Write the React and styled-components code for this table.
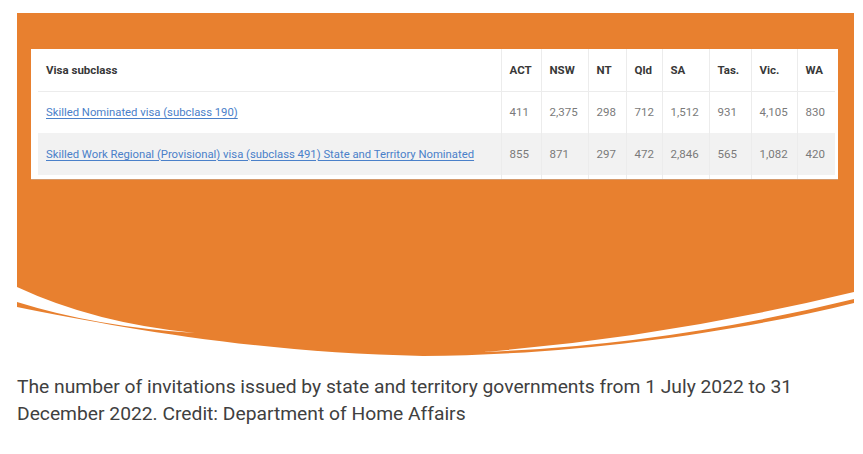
import React from "react";
import styled, { createGlobalStyle } from "styled-components";

const Global = createGlobalStyle`
  html, body { margin: 0; padding: 0; background: #ffffff; }
  body { font-family: Roboto, "Liberation Sans", Arial, sans-serif; }
`;

const ORANGE = "#e8802f";

const Page = styled.main`
  width: 863px;
  padding: 13px 0 0 17px;
  box-sizing: border-box;
`;

const Figure = styled.figure`
  margin: 0;
  width: 837px;
`;

const Banner = styled.div`
  background: ${ORANGE};
  height: 274px;
  padding: 36px 16px 0 14px;
  box-sizing: border-box;
`;

const Card = styled.div`
  background: #ffffff;
  height: 131px;
  padding: 0 3px 0 7px;
  overflow: hidden;
  box-sizing: border-box;
  border-bottom: 1px solid #d59a6c;
`;

const Table = styled.table`
  width: 797px;
  table-layout: fixed;
  border-collapse: collapse;
  font-family: Roboto, "Liberation Sans", Arial, sans-serif;
`;

const Row = styled.tr`
  height: 42px;
  background: ${(p) => (p.$shaded ? "#f2f2f2" : "transparent")};
  border-bottom: ${(p) => (p.$head ? "1px solid #ececec" : "none")};
`;

const Th = styled.th`
  text-align: left;
  font-size: 11.5px;
  font-weight: 700;
  color: #383838;
  padding: 0 8px;
  border-left: ${(p) => (p.$first ? "none" : "1px solid #ececec")};
  white-space: nowrap;
`;

const Td = styled.td`
  font-size: 11.5px;
  font-weight: 400;
  color: #7a7a7a;
  padding: 0 8px;
  border-left: ${(p) => (p.$first ? "none" : "1px solid #ececec")};
  white-space: nowrap;
`;

const VisaLink = styled.a`
  color: #4a80c9;
  font-size: 11.3px;
  text-decoration: underline;
  text-underline-offset: 2px;
  text-decoration-thickness: 1px;
`;

const Wave = styled.svg`
  display: block;
  width: 837px;
  height: 71px;
`;

const Caption = styled.figcaption`
  margin: 15px 0 0 0;
  font-size: 19.25px;
  line-height: 27px;
  color: #404040;
  width: 837px;
`;

const cols = [463, 40, 47, 38, 36, 47, 42, 46, 38];
const heads = ["ACT", "NSW", "NT", "Qld", "SA", "Tas.", "Vic.", "WA"];
const rows = [
  {
    name: "Skilled Nominated visa (subclass 190)",
    values: ["411", "2,375", "298", "712", "1,512", "931", "4,105", "830"],
  },
  {
    name: "Skilled Work Regional (Provisional) visa (subclass 491) State and Territory Nominated",
    values: ["855", "871", "297", "472", "2,846", "565", "1,082", "420"],
  },
];

export default function App() {
  return (
    <>
      <Global />
      <Page>
        <Figure>
          <Banner>
            <Card>
              <Table>
                <colgroup>
                  {cols.map((w, i) => (
                    <col key={i} style={{ width: w }} />
                  ))}
                </colgroup>
                <thead>
                  <Row $head>
                    <Th $first>Visa subclass</Th>
                    {heads.map((h) => (
                      <Th key={h}>{h}</Th>
                    ))}
                  </Row>
                </thead>
                <tbody>
                  {rows.map((r, i) => (
                    <Row key={r.name} $shaded={i === 1}>
                      <Td $first>
                        <VisaLink href="#">{r.name}</VisaLink>
                      </Td>
                      {r.values.map((v, j) => (
                        <Td key={j}>{v}</Td>
                      ))}
                    </Row>
                  ))}
                  <Row>
                    <Td $first />
                    {heads.map((h) => (
                      <Td key={h} />
                    ))}
                  </Row>
                </tbody>
              </Table>
            </Card>
          </Banner>
          <Wave viewBox="0 0 837 71" preserveAspectRatio="none">
            <path
              d="M0,0 L0,20 C100,40 240,66 406,69 C560,68 720,45 837,16 L837,0 Z"
              fill={ORANGE}
            />
            <path d="M0,0 Q77,36 178,46 Q80,40 0,15 Z" fill="#ffffff" />
            <path d="M837,5 Q650,50 466,65 Q650,58 837,12 Z" fill="#ffffff" />
          </Wave>
          <Caption>
            The number of invitations issued by state and territory governments from 1 July 2022 to 31 December 2022. Credit: Department of Home Affairs
          </Caption>
        </Figure>
      </Page>
    </>
  );
}
